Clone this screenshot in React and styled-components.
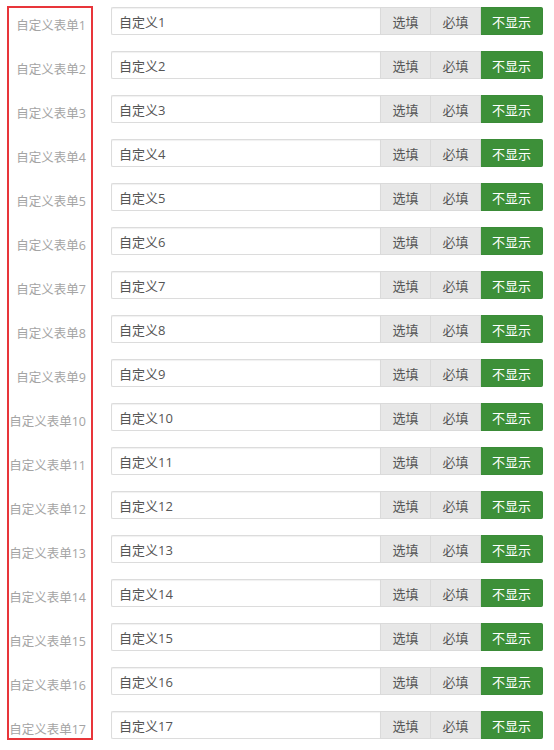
import React from 'react'
import styled, { createGlobalStyle } from 'styled-components'

const GlobalStyle = createGlobalStyle`
    body {
        margin: 0;
        background: #fff;
        font-family: "Open Sans", "Noto Sans CJK SC", sans-serif;
        font-size: 13px;
    }
`

const Page = styled.div`
    display: flex;
    align-items: flex-start;
    gap: 18px;
    padding: 6px 11px 0 7px;
`

const LabelBox = styled.div`
    width: 82px;
    border: 2px solid #e8353a;
    display: flex;
    flex-direction: column;
`

const Label = styled.div`
    height: 44px;
    box-sizing: border-box;
    padding: 8px 5px 0 0;
    line-height: 20px;
    font-size: 12.5px;
    text-align: right;
    color: #a4a4a4;
    white-space: nowrap;

    &:last-child {
        height: 26px;
    }
`

const Fields = styled.div`
    flex: 1;
    display: flex;
    flex-direction: column;
    gap: 16px;
    padding-top: 1px;
`

const Row = styled.div`
    display: flex;
    height: 28px;
`

const Input = styled.input`
    flex: 1;
    min-width: 0;
    box-sizing: border-box;
    height: 28px;
    border: 1px solid #dcdcdc;
    border-right: none;
    border-radius: 2px 0 0 2px;
    box-shadow: inset 0 1px 1px rgba(0, 0, 0, 0.06);
    padding: 0 7px;
    font: inherit;
    color: #555;
    outline: none;
`

const Choice = styled.button`
    width: ${p => p.$width}px;
    height: 28px;
    box-sizing: border-box;
    border: 1px solid ${p => (p.$active ? '#3a8b37' : '#dadada')};
    border-left-width: ${p => (p.$first ? 1 : 0)}px;
    background: ${p => (p.$active ? '#3d9039' : '#e7e7e7')};
    color: ${p => (p.$active ? '#fff' : '#555')};
    font: inherit;
    padding: 0;
    cursor: pointer;
    border-radius: ${p => (p.$last ? '0 2px 2px 0' : '0')};
`

const count = 17
const items = Array.from({ length: count }, (_, i) => i + 1)

const App = () => {
    return (
        <>
            <GlobalStyle />
            <Page>
                <LabelBox>
                    {items.map(n => (
                        <Label key={n}>自定义表单{n}</Label>
                    ))}
                </LabelBox>

                <Fields>
                    {items.map(n => (
                        <Row key={n}>
                            <Input defaultValue={`自定义${n}`} />
                            <Choice $width={51} $first>选填</Choice>
                            <Choice $width={50}>必填</Choice>
                            <Choice $width={62} $active $last>不显示</Choice>
                        </Row>
                    ))}
                </Fields>
            </Page>
        </>
    )
}

export default App
